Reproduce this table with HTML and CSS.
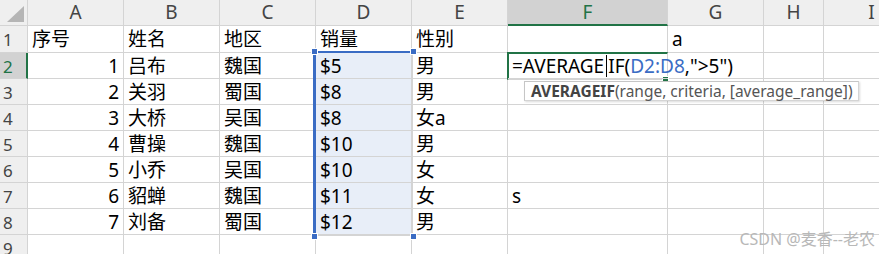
FILE: index.html
```html
<!DOCTYPE html>
<html lang="zh-CN">
<head>
    <meta charset="UTF-8">
    <title>AVERAGEIF</title>
    <link rel="stylesheet" href="styles.css">
</head>
<body>
    <div class="sheet">
        <div class="hd corner"><span class="tri"></span></div><div class="hd col">A</div><div class="hd col">B</div><div class="hd col">C</div><div class="hd col">D</div><div class="hd col">E</div><div class="hd col cur">F</div><div class="hd col">G</div><div class="hd col">H</div><div class="hd col">I</div>

        <div class="hd row">1</div><div class="c">序号</div><div class="c">姓名</div><div class="c">地区</div><div class="c">销量</div><div class="c">性别</div><div class="c"></div><div class="c">a</div><div class="c"></div><div class="c"></div>
        <div class="hd row cur">2</div><div class="c num">1</div><div class="c">吕布</div><div class="c">魏国</div><div class="c sel">$5</div><div class="c">男</div><div class="c edit">=AVERAGE<span class="caret"></span>IF(<span class="ref">D2:D8</span>,"&gt;5")</div><div class="c"></div><div class="c"></div><div class="c"></div>
        <div class="hd row">3</div><div class="c num">2</div><div class="c">关羽</div><div class="c">蜀国</div><div class="c sel">$8</div><div class="c">男</div><div class="c"></div><div class="c"></div><div class="c"></div><div class="c"></div>
        <div class="hd row">4</div><div class="c num">3</div><div class="c">大桥</div><div class="c">吴国</div><div class="c sel">$8</div><div class="c">女a</div><div class="c"></div><div class="c"></div><div class="c"></div><div class="c"></div>
        <div class="hd row">5</div><div class="c num">4</div><div class="c">曹操</div><div class="c">魏国</div><div class="c sel">$10</div><div class="c">男</div><div class="c"></div><div class="c"></div><div class="c"></div><div class="c"></div>
        <div class="hd row">6</div><div class="c num">5</div><div class="c">小乔</div><div class="c">吴国</div><div class="c sel">$10</div><div class="c">女</div><div class="c"></div><div class="c"></div><div class="c"></div><div class="c"></div>
        <div class="hd row">7</div><div class="c num">6</div><div class="c">貂蝉</div><div class="c">魏国</div><div class="c sel">$11</div><div class="c">女</div><div class="c">s</div><div class="c"></div><div class="c"></div><div class="c"></div>
        <div class="hd row">8</div><div class="c num">7</div><div class="c">刘备</div><div class="c">蜀国</div><div class="c sel">$12</div><div class="c">男</div><div class="c"></div><div class="c"></div><div class="c"></div><div class="c"></div>
        <div class="hd row">9</div><div class="c"></div><div class="c"></div><div class="c"></div><div class="c"></div><div class="c"></div><div class="c"></div><div class="c"></div><div class="c"></div><div class="c"></div>

        <!-- range D2:D8 -->
        <div class="range">
            <span class="knob tl"></span><span class="knob tr"></span>
            <span class="knob bl"></span><span class="knob br"></span>
        </div>
        <!-- cell being edited -->
        <div class="active"><span class="fill"></span></div>
        <div class="tip"><b>AVERAGEIF</b>(range, criteria, [average_range])</div>
    </div>
    <div class="mark">CSDN @麦香--老农</div>
</body>
</html>
```

FILE: styles.css
```css
body {
    margin: 0;
    background: #fff;
    overflow: hidden;
    font-family: "Noto Sans", "Noto Sans CJK SC", sans-serif;
}
.sheet {
    position: relative;
    display: grid;
    grid-template-columns: 28px repeat(5, 96px) 160px 96px 60px 96px;
    grid-template-rows: 26px 27px repeat(8, 26px);
}
.sheet > div {
    box-sizing: border-box;
    border-right: 1px solid #d4d4d4;
    border-bottom: 1px solid #d4d4d4;
    white-space: nowrap;
}
.c {
    font-size: 19px;
    line-height: 27px;
    padding: 0 4px;
    color: #000;
}
.num {
    text-align: right;
}
.sel {
    background: #e8eef8;
}
.edit {
    position: relative;
    z-index: 2;
    overflow: visible;
    border-right: none !important;
}
.ref {
    color: #3a6cc4;
}
.caret {
    display: inline-block;
    width: 1px;
    height: 22px;
    margin: 0 1px 0 2px;
    background: #000;
    vertical-align: -4px;
}
.hd {
    background: #efefef;
    color: #444;
}
.col {
    font-size: 19px;
    line-height: 25px;
    text-align: center;
}
.row {
    font-size: 17px;
    line-height: 27px;
    padding-left: 3px;
}
.cur {
    background: #d2d2d2;
    color: #217346;
}
.col.cur {
    border-bottom: 2px solid #217346;
}
.row.cur {
    border-right: 2px solid #217346;
}
.corner {
    position: relative;
}
.tri {
    position: absolute;
    right: 3px;
    bottom: 3px;
    width: 0;
    height: 0;
    border-left: 17px solid transparent;
    border-bottom: 16px solid #b5b5b5;
}
.range {
    position: absolute;
    left: 313px;
    top: 51px;
    width: 100px;
    height: 185px;
    box-sizing: border-box;
    border: 2px solid #3a6cc4;
    border-left-width: 3px;
    border-right-width: 3px;
}
.knob {
    position: absolute;
    width: 5px;
    height: 5px;
    background: #3a6cc4;
    border: 1px solid #fff;
}
.tl { left: -5px; top: -5px; }
.tr { right: -5px; top: -5px; }
.bl { left: -5px; bottom: -5px; }
.br { right: -5px; bottom: -5px; }
.active {
    position: absolute;
    left: 507px;
    top: 52px;
    width: 161px;
    height: 28px;
    box-sizing: border-box;
    border: 2px solid #217346;
    border-right: none;
}
.fill {
    position: absolute;
    right: -2px;
    bottom: -4px;
    width: 5px;
    height: 5px;
    background: #217346;
    border: 1px solid #fff;
}
.tip {
    position: absolute;
    z-index: 3;
    left: 524px;
    top: 81px;
    height: 20px;
    padding: 0 5px 0 6px;
    box-sizing: border-box;
    background: #fff;
    border: 1px solid #c6c6c6;
    box-shadow: 1px 1px 2px rgba(0, 0, 0, 0.15);
    font-size: 15.5px;
    line-height: 18px;
    color: #555;
    white-space: nowrap;
}
.tip b {
    color: #444;
}
.mark {
    position: absolute;
    right: 4px;
    bottom: 4px;
    font-size: 16px;
    color: #b8b8b8;
}
```
